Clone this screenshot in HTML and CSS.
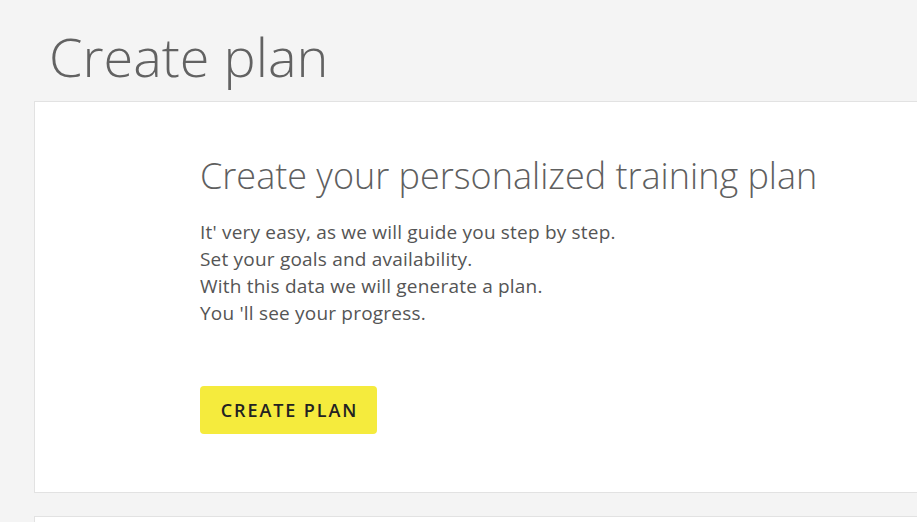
FILE: index.html
```html
<!DOCTYPE html>
<html lang="en">
<head>
<meta charset="utf-8">
<title>Create plan</title>
<link rel="stylesheet" href="styles.css">
</head>
<body>
<main class="page">
  <h1 class="page-title">Create plan</h1>
  <section class="card">
    <h2 class="card-title">Create your personalized training plan</h2>
    <p class="card-text">It' very easy, as we will guide you step by step.<br>
    Set your goals and availability.<br>
    With this data we will generate a plan.<br>
    You 'll see your progress.</p>
    <button class="btn-primary" type="button">CREATE PLAN</button>
  </section>
  <section class="card card-next"></section>
</main>
</body>
</html>
```

FILE: styles.css
```css
html, body {
  margin: 0;
  padding: 0;
  overflow: hidden;
  background: #f4f4f4;
  font-family: "Open Sans", "Liberation Sans", sans-serif;
}

.page {
  padding: 0 0 0 34px;
}

.page-title {
  margin: 0;
  padding: 19px 0 0 15px;
  font-size: 54px;
  font-weight: 300;
  line-height: 74px;
  color: #626262;
}

.card {
  margin: 8px -20px 0 0;
  background: #fff;
  border: 1px solid #e2e2e2;
  padding: 49px 20px 58px 165px;
}

.card-title {
  margin: 0;
  font-size: 36px;
  font-weight: 300;
  line-height: 49px;
  color: #5f5f5f;
}

.card-text {
  margin: 19px 0 0;
  font-size: 19px;
  letter-spacing: 0.2px;
  line-height: 27px;
  color: #555;
}

.btn-primary {
  margin-top: 59px;
  display: block;
  width: 177px;
  height: 48px;
  border: none;
  border-radius: 4px;
  background: #f5eb3d;
  color: #222;
  font-family: "Open Sans", "Liberation Sans", sans-serif;
  font-size: 18px;
  font-weight: 600;
  letter-spacing: 1.9px;
  padding: 0 0 0 2px;
  cursor: pointer;
}

.card-next {
  margin-top: 23px;
  height: 40px;
  padding: 0;
}
```
